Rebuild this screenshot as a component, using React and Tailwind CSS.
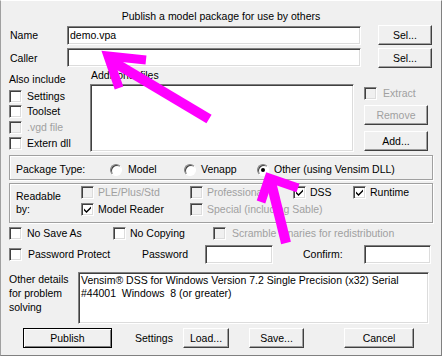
import React from 'react';

// classic 3D bits
const sunken =
  'border border-t-[#808080] border-l-[#808080] border-b-white border-r-white shadow-[inset_1px_1px_0_#404040,inset_-1px_-1px_0_#dcdcdc]';
const etched = 'border border-[#a0a0a0] shadow-[inset_1px_1px_0_#ffffff,1px_1px_0_#ffffff]';

const Box = ({ checked, disabled }) => (
  <span
    className={`inline-flex w-[13px] h-[13px] shrink-0 items-center justify-center ${sunken} ${
      disabled ? 'bg-[#f0f0f0]' : 'bg-white'
    }`}
  >
    {checked && (
      <svg width="7" height="7" viewBox="0 0 7 7">
        <path d="M0 2.5L2.5 5L7 0.5V2.5L2.5 7L0 4.5Z" fill="#000" />
      </svg>
    )}
  </span>
);

const Check = ({ label, checked, disabled, className = '' }) => (
  <div className={`h-[13px] flex items-center whitespace-nowrap gap-[4px] ${className}`}>
    <Box checked={checked} disabled={disabled} />
    <span className={disabled ? 'text-[#a0a0a0]' : ''}>{label}</span>
  </div>
);

const Radio = ({ on }) => (
  <span className="w-[12px] h-[12px] shrink-0 rounded-full bg-white border border-t-[#808080] border-l-[#808080] border-b-white border-r-white shadow-[inset_1px_1px_0_#404040] flex items-center justify-center">
    {on && <span className="w-[4px] h-[4px] rounded-full bg-black" />}
  </span>
);

const Btn = ({ children, className = '', disabled, isDefault }) => (
  <div
    className={`flex items-center justify-center h-[20px] bg-[#f0f0f0] border ${
      isDefault
        ? 'border-black shadow-[inset_1px_1px_0_#ffffff,inset_-1px_-1px_0_#808080]'
        : 'border-t-white border-l-white border-r-[#404040] border-b-[#404040] shadow-[inset_-1px_-1px_0_#a0a0a0]'
    } ${disabled ? 'text-[#a0a0a0]' : ''} ${className}`}
  >
    {children}
  </div>
);

const Arrows = () => (
  <svg
    className="absolute left-[-1px] top-[-1px] pointer-events-none"
    width="442"
    height="356"
    viewBox="0 0 442 356"
  >
    <g stroke="#ff00ff" fill="none" strokeWidth="9" strokeLinejoin="miter" strokeMiterlimit="10">
      <polyline points="146,60 108,56 119,88" />
      <line x1="110" y1="60" x2="209" y2="119" strokeWidth="10" />
      <polyline points="261,202 269,178 298,188" />
      <line x1="271" y1="182" x2="286" y2="243" strokeWidth="10" />
    </g>
  </svg>
);

export default function App() {
  return (
    <div className="relative w-[442px] h-[356px] overflow-hidden bg-[#f0f0f0] border border-t-white border-l-[#a0a0a0] border-r-[#808080] border-b-[#808080] font-['Liberation_Sans',Arial,sans-serif] text-[10.5px] leading-[13px] text-black">
      <div className="mt-[8px] h-[14px] leading-[14px] text-center">Publish a model package for use by others</div>

      {/* name / caller */}
      <div className="mt-[2px] pl-[8px] flex items-start h-[20px]">
        <div className="w-[58px] h-[20px] flex items-center pl-[1px]">Name</div>
        <div className={`mt-[1px] w-[294px] h-[19px] bg-white flex items-center pl-[2px] ${sunken}`}>demo.vpa</div>
        <Btn className="ml-[17px] w-[54px]">Sel...</Btn>
      </div>
      <div className="mt-[3px] pl-[8px] flex items-start h-[20px]">
        <div className="w-[58px] h-[20px] flex items-center pl-[1px]">Caller</div>
        <div className={`w-[294px] h-[19px] bg-white ${sunken}`} />
        <Btn className="ml-[17px] w-[54px]">Sel...</Btn>
      </div>

      {/* includes + files */}
      <div className="pl-[8px] flex items-start">
        <div className="w-[81px]">
          <div className="mt-[4px] h-[14px] leading-[14px]">Also include</div>
          <Check className="mt-[4px] gap-[5px]" label="Settings" />
          <Check className="mt-[2px] gap-[5px]" label="Toolset" />
          <Check className="mt-[3px] gap-[5px]" label=".vgd file" disabled />
          <Check className="mt-[3px] gap-[5px]" label="Extern dll" />
        </div>
        <div className="w-[264px]">
          <div className="pl-[1px] h-[14px] leading-[14px]">Additional files</div>
          <div className={`mt-[2px] h-[68px] bg-white ${sunken}`} />
        </div>
        <div className="ml-[10px] w-[64px]">
          <Check className="mt-[19px] gap-[6px]" label="Extract" disabled />
          <Btn className="mt-[5px] w-[64px]" disabled>Remove</Btn>
          <Btn className="mt-[6px] w-[64px]">Add...</Btn>
        </div>
      </div>

      {/* package type */}
      <div className={`ml-[8px] mt-[3px] w-[424px] h-[25px] flex items-center pt-[4px] pl-[6px] ${etched}`}>
        <div className="w-[94px]">Package Type:</div>
        <div className="w-[74px] flex items-center gap-[6px]">
          <Radio />
          <span>Model</span>
        </div>
        <div className="w-[73px] flex items-center gap-[5px]">
          <Radio />
          <span>Venapp</span>
        </div>
        <div className="flex items-center gap-[5px]">
          <Radio on />
          <span>Other (using Vensim DLL)</span>
        </div>
      </div>

      {/* readable by */}
      <div className={`ml-[8px] mt-[3px] w-[424px] h-[40px] flex pl-[6px] ${etched}`}>
        <div className="w-[65px] shrink-0 pt-[6px]">
          Readable
          <br />
          by:
        </div>
        <div className="w-[109px] shrink-0 pt-[2px] flex flex-col gap-[4px]">
          <Check label="PLE/Plus/Std" disabled />
          <Check label="Model Reader" checked />
        </div>
        <div className="w-[103px] shrink-0 pt-[2px] flex flex-col gap-[4px]">
          <Check label="Professional" disabled />
          <Check label="Special (including Sable)" disabled />
        </div>
        <div className="w-[60px] shrink-0 pt-[2px]">
          <Check label="DSS" checked className="gap-[3px]" />
        </div>
        <div className="pt-[2px]">
          <Check label="Runtime" checked />
        </div>
      </div>

      {/* options */}
      <div className="pl-[8px] mt-[4px] h-[13px] flex items-center">
        <Check className="w-[104px] gap-[5px]" label="No Save As" />
        <Check className="w-[100px]" label="No Copying" />
        <Check className="gap-[6px]" label="Scramble binaries for redistribution" disabled />
      </div>

      <div className="pl-[8px] mt-[5px] h-[19px] flex items-center">
        <Check className="w-[133px] gap-[6px]" label="Password Protect" />
        <div className="w-[63px]">Password</div>
        <div className={`w-[68px] h-[19px] bg-white ${sunken}`} />
        <div className="ml-[30px] w-[61px]">Confirm:</div>
        <div className={`w-[67px] h-[19px] bg-white ${sunken}`} />
      </div>

      {/* details */}
      <div className="pl-[8px] mt-[8px] flex items-start">
        <div className="w-[69px] leading-[14px]">
          Other details
          <br />
          for problem
          <br />
          solving
        </div>
        <div className={`w-[351px] h-[52px] bg-white pl-[2px] pt-[1px] whitespace-pre ${sunken}`}>
          {'Vensim® DSS for Windows Version 7.2 Single Precision (x32) Serial\n#44001  Windows  8 (or greater)'}
        </div>
      </div>

      {/* buttons */}
      <div className="pl-[8px] mt-[4px] flex items-center h-[20px]">
        <Btn className="ml-[14px] w-[89px]" isDefault>
          Publish
        </Btn>
        <div className="ml-[23px] w-[48px]">Settings</div>
        <Btn className="w-[46px]">Load...</Btn>
        <Btn className="ml-[20px] w-[55px]">Save...</Btn>
        <Btn className="ml-[40px] w-[70px]">Cancel</Btn>
      </div>

      <Arrows />
    </div>
  );
}
